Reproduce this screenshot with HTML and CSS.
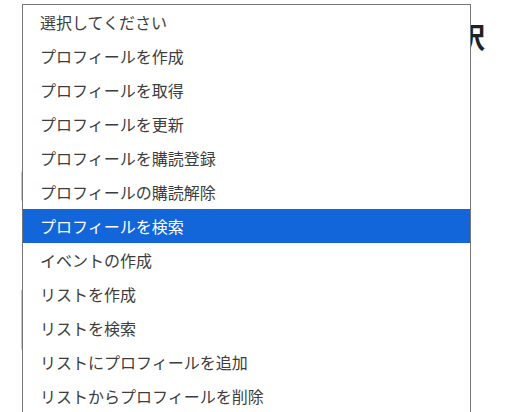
FILE: index.html
```html
<!DOCTYPE html>
<html lang="ja">
<head>
<meta charset="utf-8">
<link rel="stylesheet" href="styles.css">
</head>
<body>
<div class="page">
  <div class="header"><h1 class="title">アクションを選択</h1></div>
  <div class="form">
    <div class="field field-a"></div>
    <div class="field field-b"></div>
  </div>
</div>
<ul class="dropdown">
  <li class="opt">選択してください</li>
  <li class="opt">プロフィールを作成</li>
  <li class="opt">プロフィールを取得</li>
  <li class="opt">プロフィールを更新</li>
  <li class="opt">プロフィールを購読登録</li>
  <li class="opt">プロフィールの購読解除</li>
  <li class="opt selected">プロフィールを検索</li>
  <li class="opt">イベントの作成</li>
  <li class="opt">リストを作成</li>
  <li class="opt">リストを検索</li>
  <li class="opt">リストにプロフィールを追加</li>
  <li class="opt">リストからプロフィールを削除</li>
</ul>
</body>
</html>
```

FILE: styles.css
```css
html, body {
  margin: 0;
  padding: 0;
  background: #ffffff;
  width: 527px;
  height: 412px;
  overflow: hidden;
  font-family: "Noto Sans CJK JP", "Noto Sans", sans-serif;
}
.page {
  position: relative;
  height: 412px;
}
.header {
  display: flex;
  justify-content: flex-end;
  padding: 19px 42px 0 0;
}
.title {
  margin: 0;
  font-size: 28px;
  font-weight: 700;
  line-height: 34px;
  color: #222;
  white-space: nowrap;
}
.form {
  display: flex;
  flex-direction: column;
  padding-left: 21px;
}
.field {
  border: 1px solid #c4c4c4;
  border-radius: 3px;
  width: 440px;
}
.field-a {
  margin-top: 117px;
  height: 30px;
}
.field-b {
  margin-top: 86px;
  height: 61px;
}
.dropdown {
  position: absolute;
  left: 22px;
  top: 4px;
  width: 449px;
  box-sizing: border-box;
  margin: 0;
  padding: 0;
  list-style: none;
  border: 1px solid #767676;
  border-bottom: none;
  background: #ffffff;
}
.opt {
  height: 34px;
  line-height: 34px;
  padding-left: 17px;
  font-size: 16px;
  color: #3d3d3d;
  white-space: nowrap;
}
.selected {
  background: #1266d9;
  color: #ffffff;
}
```
